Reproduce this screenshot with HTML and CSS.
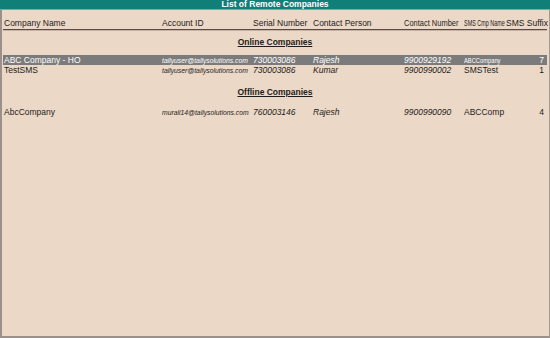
FILE: index.html
```html
<!DOCTYPE html>
<html>
<head>
<meta charset="utf-8">
<link rel="stylesheet" href="styles.css">
</head>
<body>
<div class="screen">
  <div class="title">List of Remote Companies</div>
  <div class="panel">
    <div class="row head">
      <span>Company Name</span>
      <span>Account ID</span>
      <span>Serial Number</span>
      <span>Contact Person</span>
      <span><span class="sq cn">Contact Number</span></span>
      <span><span class="sq cm">SMS Cmp Name</span></span>
      <span class="num">SMS Suffix</span>
    </div>
    <div class="section">Online Companies</div>
    <div class="row sel">
      <span>ABC Company - HO</span>
      <span class="it"><span class="sq em">tallyuser@tallysolutions.com</span></span>
      <span class="it">730003086</span>
      <span class="it">Rajesh</span>
      <span class="it">9900929192</span>
      <span><span class="sq ac">ABCCompany</span></span>
      <span class="num">7</span>
    </div>
    <div class="row">
      <span>TestSMS</span>
      <span class="it"><span class="sq em">tallyuser@tallysolutions.com</span></span>
      <span class="it">730003086</span>
      <span class="it">Kumar</span>
      <span class="it">9900990002</span>
      <span>SMSTest</span>
      <span class="num">1</span>
    </div>
    <div class="section off">Offline Companies</div>
    <div class="row r3">
      <span>AbcCompany</span>
      <span class="it"><span class="sq em">murali14@tallysolutions.com</span></span>
      <span class="it">760003146</span>
      <span class="it">Rajesh</span>
      <span class="it">9900990090</span>
      <span>ABCComp</span>
      <span class="num">4</span>
    </div>
  </div>
</div>
</body>
</html>
```
FILE: styles.css
```css
html, body {
  margin: 0;
  padding: 0;
}
body {
  width: 550px;
  height: 338px;
  background: #ecd8c6;
  font-family: "Liberation Sans", Arial, sans-serif;
  font-size: 8.5px;
  color: #1c1c1c;
  overflow: hidden;
}
.screen {
  width: 550px;
  height: 338px;
  display: flex;
  flex-direction: column;
  box-sizing: border-box;
}
.title {
  height: 9px;
  line-height: 9px;
  background: #0f7f77;
  color: #ffffff;
  font-weight: bold;
  text-align: center;
  font-size: 8.5px;
  border-bottom: 1px solid #7aa9a0;
}
.panel {
  flex: 1;
  border-left: 2px solid #9b918a;
  border-right: 1px solid #a59a92;
  border-bottom: 2px solid #9b918a;
  padding: 0 2px 0 1px;
}
.row {
  display: grid;
  grid-template-columns: 158px 91px 60px 91px 60px 42px 1fr;
  height: 10px;
  line-height: 10px;
  padding: 0 3px 0 1px;
  white-space: nowrap;
}
.head {
  margin-top: 8px;
  padding-bottom: 1px;
  border-bottom: 1px solid #5a4a44;
  margin-bottom: 7px;
  box-shadow: 0 1px 0 #c8b0a2;
}
.sq {
  display: inline-block;
  transform-origin: 0 50%;
}
.cn {
  transform: scaleX(0.88);
}
.cm {
  transform: scaleX(0.64);
}
.em {
  font-size: 8px;
  transform: scaleX(0.85);
}
.ac {
  font-size: 8px;
  transform: scaleX(0.72);
}
.num {
  text-align: right;
}
.it {
  font-style: italic;
}
.section {
  text-align: center;
  font-weight: bold;
  height: 10px;
  line-height: 10px;
  margin-bottom: 8px;
  text-decoration: underline;
}
.sel {
  background: #7b7b7b;
  color: #ffffff;
}
.off {
  margin-top: 12px;
  margin-bottom: 10px;
}
```
